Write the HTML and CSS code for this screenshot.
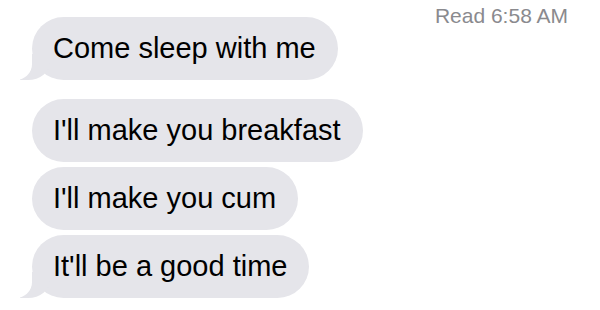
FILE: index.html
```html
<!DOCTYPE html>
<html>
<head>
<meta charset="utf-8">
<link rel="stylesheet" href="styles.css">
</head>
<body>
<div class="thread">
  <div class="status"><span class="read">Read</span> 6:58 AM</div>
  <div class="bubble tail first">Come sleep with me</div>
  <div class="group">
    <div class="bubble">I'll make you breakfast</div>
    <div class="bubble">I'll make you cum</div>
    <div class="bubble tail">It'll be a good time</div>
  </div>
</div>
</body>
</html>
```
FILE: styles.css
```css
html, body {
  margin: 0;
  padding: 0;
  background: #ffffff;
}
.thread {
  width: 600px;
  height: 310px;
  box-sizing: border-box;
  display: flex;
  flex-direction: column;
  align-items: flex-start;
  padding: 4px 32px 0 32px;
  font-family: "Liberation Sans", Arial, sans-serif;
}
.status {
  align-self: flex-end;
  font-size: 21px;
  line-height: 24px;
  color: #8a8a8e;
  margin-bottom: -11px;
}
.read {
  font-weight: normal;
}
.bubble {
  position: relative;
  background: #e5e5ea;
  color: #000;
  font-size: 29px;
  line-height: 63px;
  height: 63px;
  padding: 0 22px 0 21px;
  border-radius: 32px;
  white-space: nowrap;
}
.first {
  margin-bottom: 19px;
}
.group {
  display: flex;
  flex-direction: column;
  align-items: flex-start;
  gap: 5px;
}
.tail::before {
  content: "";
  position: absolute;
  bottom: 0;
  left: -12px;
  width: 30px;
  height: 26px;
  background: #e5e5ea;
  border-bottom-right-radius: 22px 18px;
}
.tail::after {
  content: "";
  position: absolute;
  bottom: 0;
  left: -32px;
  width: 32px;
  height: 26px;
  background: #ffffff;
  border-bottom-right-radius: 16px;
}
```
